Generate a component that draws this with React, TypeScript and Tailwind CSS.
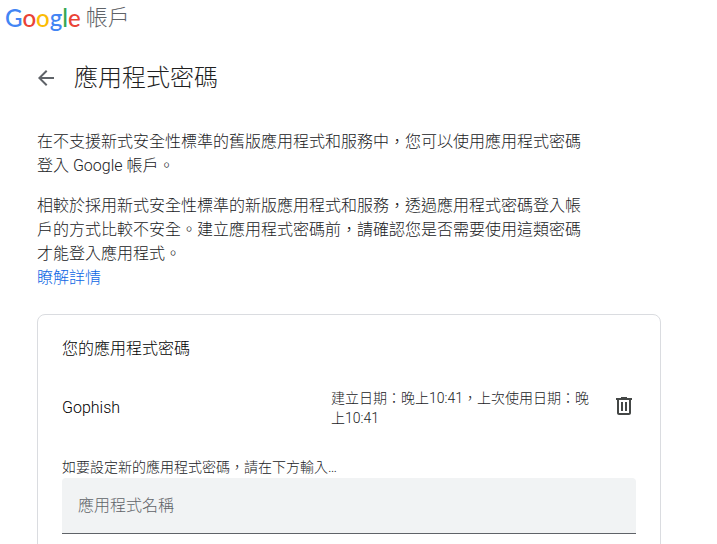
import React, { useState } from 'react';

const LOGO_LETTERS = [
  { char: 'G', color: 'text-[#4285f4]' },
  { char: 'o', color: 'text-[#ea4335]' },
  { char: 'o', color: 'text-[#fbbc05]' },
  { char: 'g', color: 'text-[#4285f4]' },
  { char: 'l', color: 'text-[#34a853]' },
  { char: 'e', color: 'text-[#ea4335]' },
];

const passwords = [
  { name: 'Gophish', detail: '建立日期：晚上10:41，上次使用日期：晚上10:41' },
];

function BackIcon() {
  return (
    <svg viewBox="0 0 24 24" className="size-6 fill-current" aria-hidden="true">
      <path d="M20 11H7.83l5.59-5.59L12 4l-8 8 8 8 1.41-1.41L7.83 13H20v-2z" />
    </svg>
  );
}

function TrashIcon() {
  return (
    <svg viewBox="0 0 24 24" className="size-6 fill-current" aria-hidden="true">
      <path d="M15 4V3H9v1H4v2h1v13c0 1.1.9 2 2 2h10c1.1 0 2-.9 2-2V6h1V4h-5zm2 15H7V6h10v13zM9 8h2v9H9V8zm4 0h2v9h-2V8z" />
    </svg>
  );
}

function Header() {
  return (
    <header className="flex h-9 items-center px-[5px]">
      <a href="#home" className="flex items-center gap-[5px]">
        <span className="font-['Lato'] text-2xl leading-9 font-medium">
          {LOGO_LETTERS.map((letter, index) => (
            <span key={index} className={letter.color}>
              {letter.char}
            </span>
          ))}
        </span>
        <span className="text-[22px] leading-9 text-[#5f6368]">帳戶</span>
      </a>
    </header>
  );
}

function PasswordCard() {
  const [name, setName] = useState('');

  return (
    <section className="mt-6 w-full rounded-lg border border-[#dadce0] px-6 pt-[22px] pb-6">
      <h2 className="text-base leading-6 text-black">您的應用程式密碼</h2>

      <ul className="mt-6">
        {passwords.map((password) => (
          <li key={password.name} className="flex items-center py-[3px]">
            <span className="flex-1 text-base leading-6 text-black">{password.name}</span>
            <span className="w-[261px] text-sm leading-5 text-[#202124]">{password.detail}</span>
            <button
              type="button"
              className="ml-5 flex w-6 items-center justify-center pb-1 text-[#444746]"
              aria-label="刪除"
            >
              <TrashIcon />
            </button>
          </li>
        ))}
      </ul>

      {/* New password form */}
      <form className="mt-[25px]" onSubmit={(event) => event.preventDefault()}>
        <label htmlFor="app-name" className="block text-sm leading-[22px] text-[#202124]">
          如要設定新的應用程式密碼，請在下方輸入…
        </label>
        <input
          id="app-name"
          type="text"
          value={name}
          onChange={(event) => setName(event.target.value)}
          placeholder="應用程式名稱"
          className="block h-14 w-full rounded-t border-b border-[#5f6368] bg-[#f1f3f4] px-4 text-base font-light text-[#1f1f1f] outline-none placeholder:text-[#5f6368]"
        />
      </form>
    </section>
  );
}

export default function App() {
  return (
    <div className="bg-white font-['Roboto','Noto_Sans_CJK_TC',sans-serif] font-light" lang="zh-Hant">
      <Header />

      <main className="max-w-[698px] px-[37px] pt-6">
        <div className="flex items-center">
          <button
            type="button"
            className="-ml-[3px] flex size-6 items-center justify-center text-[#5f6368]"
            aria-label="返回"
          >
            <BackIcon />
          </button>
          <h1 className="ml-4 text-2xl leading-9 text-[#1f1f1f]">應用程式密碼</h1>
        </div>

        <div className="mt-[34px] max-w-[552px] space-y-4 text-base leading-6 text-[#202124]">
          <p>在不支援新式安全性標準的舊版應用程式和服務中，您可以使用應用程式密碼登入 Google 帳戶。</p>
          <p>
            相較於採用新式安全性標準的新版應用程式和服務，透過應用程式密碼登入帳戶的方式比較不安全。建立應用程式密碼前，請確認您是否需要使用這類密碼才能登入應用程式。
            <a href="#learn-more" className="block text-[#0b66e4]">
              瞭解詳情
            </a>
          </p>
        </div>

        <PasswordCard />
      </main>
    </div>
  );
}
